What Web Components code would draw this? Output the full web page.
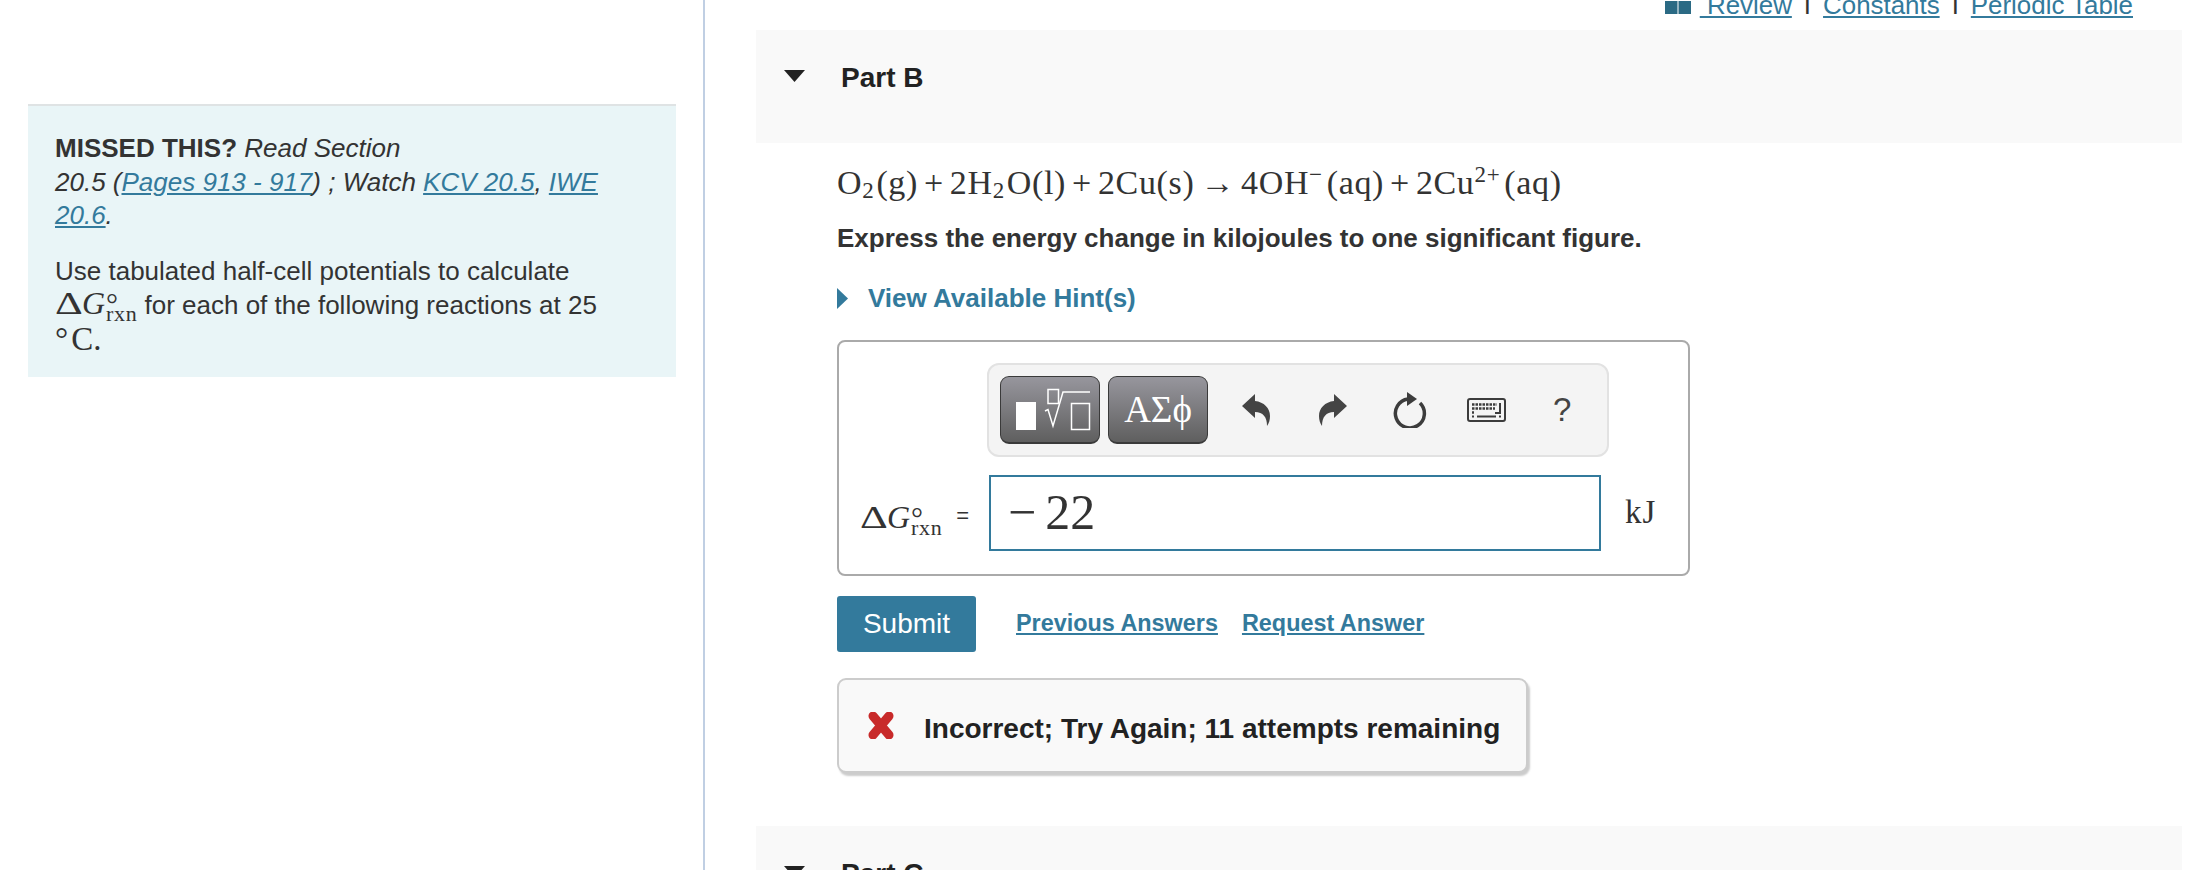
<!DOCTYPE html>
<html>
<head>
<meta charset="utf-8">
<title>Part B</title>
<style>
  html, body { margin: 0; height: 870px; overflow: hidden; background: #fff; }
  body { font-family: "Liberation Sans", Arial, sans-serif; color: #333; }
  side-note a { color: #337a9c; }
  .deg { font-family: "Liberation Serif", serif; font-size: 33px; line-height: 1; }
  .deg span { margin-right: 3px; }
</style>
</head>
<body>
<assignment-page>
  <side-note slot="side">
    <p><b>MISSED THIS?</b> <i>Read Section<br>20.5 (<a href="#">Pages 913 - 917</a>) ; Watch <a href="#">KCV 20.5</a>, <a href="#">IWE 20.6</a>.</i></p>
    <p>Use tabulated half-cell potentials to calculate <delta-g></delta-g> for each of the following reactions at 25 <span class="deg"><span>°</span>C.</span></p>
  </side-note>
  <top-links></top-links>
  <part-panel label="Part B">
    <reaction-line></reaction-line>
    <p class="ask">Express the energy change in kilojoules to one significant figure.</p>
    <hint-toggle></hint-toggle>
    <answer-box></answer-box>
    <submit-row></submit-row>
    <feedback-box>Incorrect; Try Again; 11 attempts remaining</feedback-box>
  </part-panel>
  <part-panel label="Part C"></part-panel>
</assignment-page>

<script>
class AssignmentPage extends HTMLElement {
  constructor() {
    super();
    this.attachShadow({ mode: "open" });
  }

  connectedCallback() {
    this.shadowRoot.innerHTML = `
    <style>
      :host { display: grid; grid-template-columns: 703px 1fr; height: 870px; overflow: hidden; }
      .left { padding: 104px 27px 0 28px; }
      .right { border-left: 2px solid #c0cfe3; padding: 0 20px 0 51px; }
    </style>
    <div class="left"><slot name="side"></slot></div>
    <div class="right"><slot></slot></div>
    `;
  }
}
customElements.define("assignment-page", AssignmentPage);

class SideNote extends HTMLElement {
  constructor() {
    super();
    this.attachShadow({ mode: "open" });
  }

  connectedCallback() {
    this.shadowRoot.innerHTML = `
    <style>
      :host {
        display: block;
        box-sizing: border-box;
        height: 273px;
        background: #e9f5f7;
        border-top: 2px solid #dfe3e4;
        padding: 26px 68px 0 27px;
        font-size: 26px;
        line-height: 33.7px;
        color: #333;
      }
      ::slotted(p) { margin: 0 0 22px; }
    </style>
    <slot></slot>
    `;
  }
}
customElements.define("side-note", SideNote);

// delta G with the degree and rxn stacked after it
class DeltaG extends HTMLElement {
  constructor() {
    super();
    this.attachShadow({ mode: "open" });
  }

  connectedCallback() {
    this.shadowRoot.innerHTML = `
    <style>
      :host { display: inline-flex; align-items: baseline; margin-bottom: -14px; font-family: "Liberation Serif", serif; font-size: 32px; line-height: 24px; vertical-align: baseline; }
      .d { display: inline-block; width: 27px; transform: scaleX(1.35); transform-origin: left; }
      .stack { display: inline-flex; flex-direction: column; align-items: flex-start; font-size: 22px; line-height: 15px; letter-spacing: .6px; margin-left: 1px; }
      .stack span:first-child { font-size: 30px; line-height: 4px; height: 4px; }
    </style>
    <span class="d">Δ</span><i>G</i>
    <span class="stack"><span>°</span><span>rxn</span></span>
    `;
  }
}
customElements.define("delta-g", DeltaG);

class TopLinks extends HTMLElement {
  constructor() {
    super();
    this.attachShadow({ mode: "open" });
  }

  connectedCallback() {
    this.shadowRoot.innerHTML = `
    <style>
      :host { display: flex; justify-content: flex-end; align-items: flex-end; height: 30px; overflow: hidden; font-size: 25.900px; line-height: 30px; padding-right: 49px; box-sizing: border-box; }
      .row { display: flex; align-items: flex-end; margin-bottom: 10px; }
      a { color: #337a9c; text-decoration: underline; }
      .sep { color: #333; margin: 0 12px; }
      svg { margin: 0 9px 5px 0; }
    </style>
    <div class="row">
      <svg width="26" height="14" viewBox="0 0 26 14"><path d="M0 0h12.500v13H0zM13.500 0H26v13H13.500z" fill="#2b6a84"/></svg>
      <a href="#">&nbsp;Review</a><span class="sep">I</span><a href="#">Constants</a><span class="sep">I</span><a href="#">Periodic Table</a>
    </div>
    `;
  }
}
customElements.define("top-links", TopLinks);

class PartPanel extends HTMLElement {
  constructor() {
    super();
    this.attachShadow({ mode: "open" });
  }

  connectedCallback() {
    let label = this.getAttribute("label");
    this.shadowRoot.innerHTML = `
    <style>
      :host { display: block; }
      .head { display: flex; align-items: flex-start; box-sizing: border-box; height: 113px; background: #f9f9f9; padding: 32px 0 0 28px; font-weight: bold; font-size: 28px; line-height: 32px; color: #222; }
      svg { margin: 8px 36px 0 0; }
      .body { padding-left: 81px; }
      ::slotted(p) { margin: 0; }
      ::slotted(.ask) { font-weight: bold; font-size: 26px; line-height: 30px; margin-bottom: 30px; color: #333; }
    </style>
    <div class="head">
      <svg width="21" height="12" viewBox="0 0 21 12"><path d="M0 0h21L10.500 12z" fill="#222"/></svg>
      <span>${label}</span>
    </div>
    <div class="body"><slot></slot></div>
    `;
  }
}
customElements.define("part-panel", PartPanel);

class ReactionLine extends HTMLElement {
  constructor() {
    super();
    this.attachShadow({ mode: "open" });
  }

  connectedCallback() {
    this.shadowRoot.innerHTML = `
    <style>
      :host { display: block; font-family: "Liberation Serif", serif; font-size: 34px; line-height: 40px; letter-spacing: .65px; padding: 20px 0 20px; color: #333; white-space: nowrap; }
      sub, sup { font-size: 23px; line-height: 0; }
      sup { margin-right: 4px; }
      sub { margin-right: 2px; vertical-align: -4px; }
      .op { margin: 0 6px; }
    </style>
    O<sub>2</sub>(g)<span class="op">+</span>2H<sub>2</sub>O(l)<span class="op">+</span>2Cu(s)<span class="op">→</span>4OH<sup>−</sup>(aq)<span class="op">+</span>2Cu<sup>2+</sup>(aq)
    `;
  }
}
customElements.define("reaction-line", ReactionLine);

class HintToggle extends HTMLElement {
  constructor() {
    super();
    this.attachShadow({ mode: "open" });
  }

  connectedCallback() {
    this.shadowRoot.innerHTML = `
    <style>
      :host { display: flex; align-items: center; height: 30px; margin-bottom: 27px; color: #337a9c; font-weight: bold; font-size: 26px; }
      svg { margin-right: 20px; }
    </style>
    <svg width="11" height="21" viewBox="0 0 11 21"><path d="M0 0l11 10.500L0 21z" fill="#337a9c"/></svg>
    <span>View Available Hint(s)</span>
    `;
  }
}
customElements.define("hint-toggle", HintToggle);

class MathToolbar extends HTMLElement {
  constructor() {
    super();
    this.attachShadow({ mode: "open" });
  }

  connectedCallback() {
    this.shadowRoot.innerHTML = `
    <style>
      :host { display: flex; align-items: center; box-sizing: border-box; width: 622px; height: 94px; margin-left: -1px; background: #f4f4f4; border: 2px solid #e2e2e2; border-radius: 12px; padding-left: 11px; }
      .btn { box-sizing: border-box; display: flex; align-items: center; justify-content: center; width: 100px; height: 68px; margin-right: 8px; border-radius: 9px; border: 1px solid #3a3a3a; border-bottom-width: 2px; background: linear-gradient(#97969d, #5f5f5f); color: #fff; font-family: "Liberation Serif", serif; font-size: 37px; }
      .icons { display: flex; align-items: center; margin-left: 26px; }
      svg { display: block; }
      .q { font-size: 33px; color: #444; font-family: "Liberation Sans", sans-serif; margin-left: 47px; }
    </style>
    <div class="btn">
      <svg width="98" height="65" viewBox="0 0 98 65">
        <rect x="15" y="25" width="20" height="28" fill="#fff"/>
        <path d="M44 34l3-1.500L52 49l10-34h27" fill="none" stroke="#fff" stroke-width="1.500"/>
        <rect x="47" y="12.500" width="10.500" height="14" fill="none" stroke="#fff" stroke-width="1.500"/>
        <rect x="70.500" y="26.500" width="18" height="26" fill="none" stroke="#fff" stroke-width="1.500"/>
      </svg>
    </div>
    <div class="btn">ΑΣϕ</div>
    <div class="icons">
      <svg width="28" height="32" viewBox="0 0 28 32"><path d="M0 12L13 0v7c9 1 15 7 15 15 0 4-1 7-3 10 0-9-4-14-12-14v6z" fill="#444"/></svg>
      <svg width="28" height="32" viewBox="0 0 28 32" style="margin-left:49px"><path d="M28 12L15 0v7C6 8 0 14 0 22c0 4 1 7 3 10 0-9 4-14 12-14v6z" fill="#444"/></svg>
      <svg width="34" height="36" viewBox="0 0 34 36" style="margin-left:46px"><path d="M15 7A14.500 14.500 0 1 0 27 11" fill="none" stroke="#3c3c3c" stroke-width="3.500"/><path d="M14 0l10 7-10 7z" fill="#3c3c3c"/></svg>
      <svg width="39" height="24" viewBox="0 0 39 24" style="margin-left:40px"><rect x="1" y="1" width="37" height="22" rx="2" fill="#f4f4f4" stroke="#3c3c3c" stroke-width="2"/><path d="M5 6.500h25M5 10.500h23M5 14.500h2" stroke="#3c3c3c" stroke-width="2.500" stroke-dasharray="2.500 1" fill="none"/><path d="M33 5v10h-5M10 18.500h19M5 18.500h2M32 18.500h2" stroke="#3c3c3c" stroke-width="2" fill="none"/></svg>
      <span class="q">?</span>
    </div>
    `;
  }
}
customElements.define("math-toolbar", MathToolbar);

class AnswerBox extends HTMLElement {
  constructor() {
    super();
    this.attachShadow({ mode: "open" });
  }

  connectedCallback() {
    this.shadowRoot.innerHTML = `
    <style>
      :host { display: block; box-sizing: border-box; width: 853px; height: 236px; border: 2px solid #aaa; border-radius: 8px; padding: 21px 0 0 149px; margin-bottom: 19px; }
      .row { display: flex; align-items: center; margin: 18px 0 0 -128px; }
      .label { display: flex; align-items: center; width: 129px; }
      .eq { font-size: 22px; margin: 6px 0 0 14px; }
      .field { box-sizing: border-box; width: 612px; height: 76px; border: 2px solid #337a9c; padding: 0 0 3px 17px; display: flex; align-items: center; font-family: "Liberation Serif", serif; font-size: 50px; color: #333; }
      .field span { margin-right: 9px; }
      .unit { margin: 0 0 2px 24px; font-family: "Liberation Serif", serif; font-size: 33px; letter-spacing: 1px; }
    </style>
    <math-toolbar></math-toolbar>
    <div class="row">
      <div class="label"><delta-g></delta-g><span class="eq">=</span></div>
      <div class="field"><span>−</span>22</div>
      <div class="unit">kJ</div>
    </div>
    `;
  }
}
customElements.define("answer-box", AnswerBox);

class SubmitRow extends HTMLElement {
  constructor() {
    super();
    this.attachShadow({ mode: "open" });
  }

  connectedCallback() {
    this.shadowRoot.innerHTML = `
    <style>
      :host { display: flex; align-items: center; height: 57px; margin-bottom: 26px; }
      .submit { display: flex; align-items: center; justify-content: center; width: 139px; height: 56px; border-radius: 3px; background: #337a9c; color: #fff; font-size: 28px; }
      a { color: #337a9c; font-weight: bold; font-size: 23.400px; margin-left: 24px; }
      a:first-of-type { margin-left: 40px; }
    </style>
    <div class="submit">Submit</div>
    <a href="#">Previous Answers</a>
    <a href="#">Request Answer</a>
    `;
  }
}
customElements.define("submit-row", SubmitRow);

class FeedbackBox extends HTMLElement {
  constructor() {
    super();
    this.attachShadow({ mode: "open" });
  }

  connectedCallback() {
    this.shadowRoot.innerHTML = `
    <style>
      :host { display: flex; align-items: center; box-sizing: border-box; width: 691px; height: 95px; margin-bottom: 53px; background: #f9f9f9; border: 2px solid #ccc; border-radius: 9px; box-shadow: 2px 3px 2px #ccc; padding-left: 28px; font-weight: bold; font-size: 28px; color: #222; }
      svg { margin-right: 29px; flex: none; }
      span { margin-top: 6px; }
    </style>
    <svg width="28" height="27" viewBox="0 0 28 27"><path d="M6 4l16 19M22 4L6 23" stroke="#c82a2a" stroke-width="9" stroke-linecap="round"/></svg>
    <span><slot></slot></span>
    `;
  }
}
customElements.define("feedback-box", FeedbackBox);
</script>
</body>
</html>
